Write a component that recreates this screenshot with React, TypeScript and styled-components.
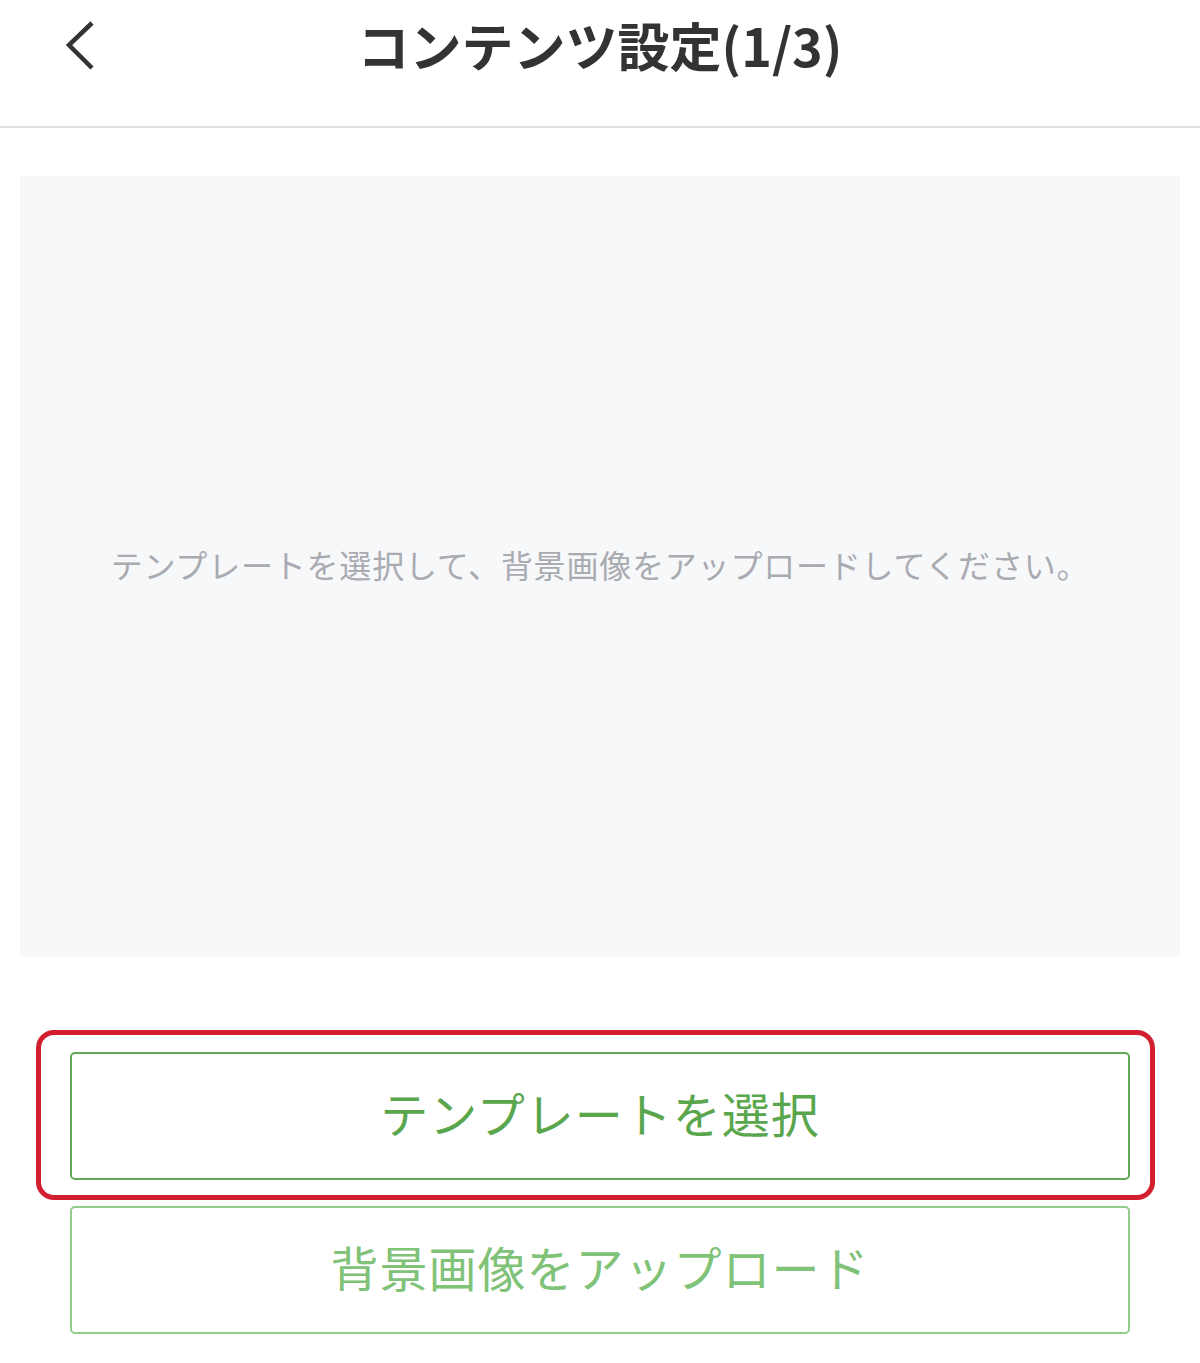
import React from "react";
import styled, { createGlobalStyle } from "styled-components";

const Global = createGlobalStyle`
  html, body { margin: 0; padding: 0; background: #ffffff; }
  body { font-family: "Noto Sans CJK JP", "Noto Sans", sans-serif; }
  * { box-sizing: border-box; }
`;

const Page = styled.div`
  width: 1200px;
  min-height: 1363px;
  background: #ffffff;
  display: flex;
  flex-direction: column;
`;

const Header = styled.header`
  height: 128px;
  border-bottom: 2px solid #e2e2e2;
  display: grid;
  grid-template-columns: 160px 1fr 160px;
  align-items: center;
`;

const BackButton = styled.button`
  border: none;
  background: none;
  padding: 0;
  margin-left: 62px;
  margin-top: -34px;
  width: 40px;
  height: 52px;
  display: flex;
  align-items: center;
  justify-content: center;
  cursor: pointer;
`;

const Title = styled.h1`
  margin: -36px 0 0;
  text-align: center;
  font-family: "Noto Sans CJK JP", sans-serif;
  font-weight: 700;
  font-size: 52px;
  letter-spacing: 0;
  color: #333333;
  line-height: 1;
`;

const Content = styled.main`
  padding: 48px 20px 0;
  display: flex;
  flex-direction: column;
`;

const Preview = styled.div`
  height: 781px;
  background: #f7f8fa;
  display: flex;
  align-items: center;
  justify-content: center;
  padding-bottom: 6px;
`;

const Placeholder = styled.p`
  margin: 0;
  font-size: 32px;
  color: #a9abb1;
  font-weight: 400;
  letter-spacing: 0.8px;
`;

const Actions = styled.div`
  padding: 95px 70px 0;
  display: flex;
  flex-direction: column;
  gap: 26px;
`;

const Highlight = styled.div`
  position: relative;
`;

const Annotation = styled.div`
  position: absolute;
  left: -34px;
  right: -25px;
  top: -22px;
  bottom: -20px;
  border: 5px solid #d21f2f;
  border-radius: 18px;
  pointer-events: none;
`;

const ActionButton = styled.button<{ $muted?: boolean }>`
  width: 100%;
  height: 128px;
  background: #ffffff;
  border: 2.5px solid ${(p) => (p.$muted ? "#92cc8b" : "#62a956")};
  border-radius: 5px;
  font-family: "Noto Sans CJK JP", sans-serif;
  font-size: 48px;
  font-weight: 400;
  color: ${(p) => (p.$muted ? "#80c278" : "#5aa64c")};
  display: flex;
  align-items: center;
  justify-content: center;
  padding: 0 0 8px;
  letter-spacing: 1px;
  cursor: pointer;
`;

export default function App() {
  return (
    <>
      <Global />
      <Page>
        <Header>
          <BackButton aria-label="戻る">
            <svg width="36" height="52" viewBox="0 0 36 52" fill="none">
              <path d="M28 3 L5 25 L28 48" stroke="#333" strokeWidth="4.5" strokeLinecap="butt" strokeLinejoin="miter" />
            </svg>
          </BackButton>
          <Title>コンテンツ設定(1/3)</Title>
          <div />
        </Header>
        <Content>
          <Preview>
            <Placeholder>テンプレートを選択して、背景画像をアップロードしてください。</Placeholder>
          </Preview>
        </Content>
        <Actions>
          <Highlight>
            <Annotation />
            <ActionButton>テンプレートを選択</ActionButton>
          </Highlight>
          <ActionButton $muted>背景画像をアップロード</ActionButton>
        </Actions>
      </Page>
    </>
  );
}
